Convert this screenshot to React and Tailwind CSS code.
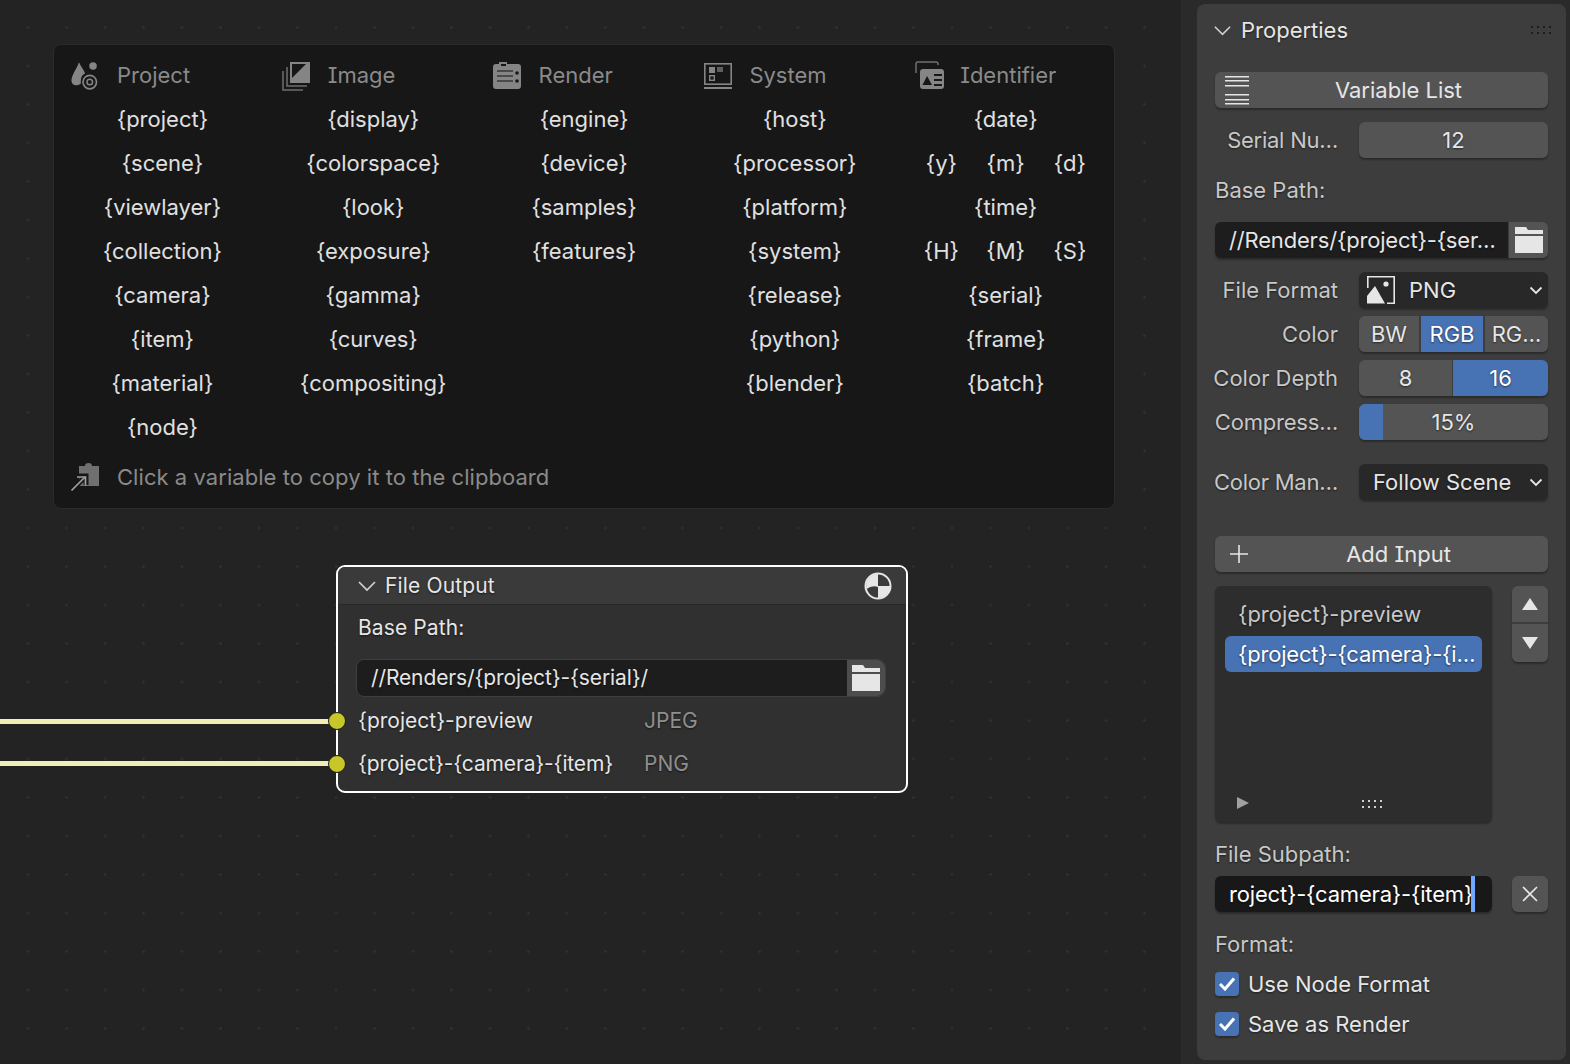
import React from 'react';

const shadow = '[text-shadow:0_1px_2px_rgba(0,0,0,0.55)]';

// icons for the variable list headers, sized in real pixels
const ProjectIcon = () => (
  <svg width="32" height="32" viewBox="0 0 32 32" fill="#858585">
    <path d="M8.5 2.5 C10 6 14 11 15 14.5 C12 15.5 10 19 10.6 24.6 C10 26.6 7 27 5.2 27 C2.5 27 0.5 24.8 0.5 22 C0.5 16 6.5 9 8.5 2.5Z" />
    <circle cx="23.5" cy="6.5" r="4" />
    <circle cx="20" cy="23.5" r="7.2" fill="none" stroke="#858585" strokeWidth="1.8" />
    <circle cx="20" cy="23.5" r="3" fill="none" stroke="#858585" strokeWidth="1.6" />
  </svg>
);

const ImageIcon = () => (
  <svg width="30" height="32" viewBox="0 0 30 32" fill="none">
    <path d="M8 3 H28 V24 H8Z" fill="#858585" />
    <path d="M10 5 H24 L10 19Z" fill="#171717" />
    <path d="M5 8 V27 H25" stroke="#6f6f6f" strokeWidth="1.5" />
    <path d="M1 12 V31 H21" stroke="#6f6f6f" strokeWidth="1.5" />
  </svg>
);

const RenderIcon = () => (
  <svg width="30" height="32" viewBox="1 0 30 32">
    <path d="M7 5 V3 H15 V5 H26 Q29 5 29 8 V27 Q29 30 26 30 H4 Q1 30 1 27 V8 Q1 5 4 5Z" fill="#858585" />
    <rect x="9" y="5" width="5" height="2" fill="#171717" />
    <rect x="5" y="11" width="16" height="2" fill="#4a4a4a" />
    <rect x="5" y="16" width="16" height="2" fill="#4a4a4a" />
    <rect x="5" y="21" width="16" height="2" fill="#4a4a4a" />
    <circle cx="25" cy="14" r="1.8" fill="#171717" />
    <circle cx="25" cy="22" r="1.8" fill="#171717" />
  </svg>
);

const SystemIcon = () => (
  <svg width="30" height="32" viewBox="0 0 30 32" fill="none">
    <rect x="1.8" y="4.8" width="26.4" height="20.4" stroke="#858585" strokeWidth="1.6" />
    <rect x="1" y="28" width="28" height="2" fill="#858585" />
    <rect x="6" y="8" width="6" height="6" fill="#858585" />
    <rect x="14" y="8" width="6" height="5" fill="#5f5f5f" />
    <rect x="6.7" y="16.7" width="4.6" height="4.6" stroke="#858585" strokeWidth="1.4" />
  </svg>
);

const IdentifierIcon = () => (
  <svg width="30" height="32" viewBox="0 0 30 32" fill="none">
    <path d="M2 14 V5 Q2 3 4 3 H22 Q24 3 24 5 V6" stroke="#6f6f6f" strokeWidth="1.5" />
    <rect x="6" y="10" width="24" height="20" rx="3" fill="#858585" />
    <path d="M8.5 26 L13 17 L18 26Z" fill="#171717" />
    <rect x="20" y="15" width="8" height="2" fill="#171717" />
    <rect x="20" y="20" width="8" height="2" fill="#171717" />
    <rect x="20" y="25" width="8" height="2" fill="#171717" />
  </svg>
);

const ClipboardIcon = () => (
  <svg width="30" height="30" viewBox="0 0 30 30" fill="none">
    <path d="M9 4 H15 Q15 1 18.5 1 Q22 1 22 4 H29 V24 H9Z" fill="#707070" />
    <path d="M2 28 L15 15" stroke="#171717" strokeWidth="5" />
    <path d="M7 14 H16 V23" stroke="#171717" strokeWidth="5" />
    <path d="M1.5 28.5 L15 15" stroke="#a0a0a0" strokeWidth="1.7" />
    <path d="M7 15 H15.5 V23.5" stroke="#a0a0a0" strokeWidth="1.7" />
  </svg>
);

const FolderIcon = () => (
  <svg width="28" height="26" viewBox="0 0 28 26" fill="#e6e6e6">
    <path d="M0 0 H11 L13 3 H28 V7 H0Z" />
    <rect x="0" y="9" width="28" height="17" />
  </svg>
);

const Chevron = ({ size = 20, color = '#d0d0d0' }) => (
  <svg width={size} height={size} viewBox="0 0 20 20" fill="none">
    <path d="M2 6 L10 14 L18 6" stroke={color} strokeWidth="1.7" />
  </svg>
);

const SmallChevron = () => (
  <svg width="14" height="10" viewBox="0 0 14 10" fill="none" className="shrink-0">
    <path d="M1.5 2.5 L7 8 L12.5 2.5" stroke="#e6e6e6" strokeWidth="1.8" />
  </svg>
);

const Dots = ({ color = '#cfcfcf' }) => (
  <svg width="22" height="10" viewBox="0 0 22 10" fill={color}>
    {[1, 7, 13, 19].map((x) => (
      <React.Fragment key={x}>
        <rect x={x} y="1" width="2" height="2" />
        <rect x={x} y="7" width="2" height="2" />
      </React.Fragment>
    ))}
  </svg>
);

const columns = [
  { title: 'Project', icon: <ProjectIcon />, items: ['{project}', '{scene}', '{viewlayer}', '{collection}', '{camera}', '{item}', '{material}', '{node}'] },
  { title: 'Image', icon: <ImageIcon />, items: ['{display}', '{colorspace}', '{look}', '{exposure}', '{gamma}', '{curves}', '{compositing}'] },
  { title: 'Render', icon: <RenderIcon />, items: ['{engine}', '{device}', '{samples}', '{features}'] },
  { title: 'System', icon: <SystemIcon />, items: ['{host}', '{processor}', '{platform}', '{system}', '{release}', '{python}', '{blender}'] },
  { title: 'Identifier', icon: <IdentifierIcon />, items: ['{date}', ['{y}', '{m}', '{d}'], '{time}', ['{H}', '{M}', '{S}'], '{serial}', '{frame}', '{batch}'] },
];

const VariableList = () => (
  <div className="absolute left-[53px] top-[44px] h-[465px] w-[1062px] rounded-lg border border-[#2b2b2b] bg-[#171717] px-[3px] pt-[8px] text-[22px]">
    <div className="grid grid-cols-5">
      {columns.map((col) => (
        <div key={col.title} className="flex flex-col">
          <div className="flex h-11 items-center gap-4 pl-[14px] text-[#8a8a8a]">
            <span className="flex w-[30px] shrink-0 overflow-visible">{col.icon}</span>
            <span>{col.title}</span>
          </div>
          {col.items.map((item, i) =>
            Array.isArray(item) ? (
              <div key={i} className="mx-[9px] grid h-11 grid-cols-3 items-center text-center text-[#e0e0e0]">
                {item.map((part) => (
                  <span key={part}>{part}</span>
                ))}
              </div>
            ) : (
              <div key={i} className="flex h-11 items-center justify-center text-[#e0e0e0]">
                {item}
              </div>
            ),
          )}
        </div>
      ))}
    </div>
    <div className="absolute bottom-[9px] left-[16px] flex h-11 items-center gap-[17px] text-[#8a8a8a]">
      <span className="flex w-[30px] shrink-0">
        <ClipboardIcon />
      </span>
      <span className="tracking-[0.05px]">Click a variable to copy it to the clipboard</span>
    </div>
  </div>
);

const FileOutputNode = () => (
  <div className={`absolute left-[336px] top-[565px] h-[228px] w-[572px] rounded-[9px] border-2 border-white bg-[#303030] text-[21px] text-[#e6e6e6] ${shadow}`}>
    <div className="flex h-[38px] items-center rounded-t-[7px] border-b border-[#282828] bg-[#3a3a3a] pl-[19px] pr-[14px]">
      <Chevron />
      <span className="ml-[8px] flex-1 tracking-[0.15px]">File Output</span>
      <svg width="28" height="28" viewBox="0 0 28 28">
        <circle cx="14" cy="14" r="12.5" fill="#3a3a3a" stroke="#e6e6e6" strokeWidth="2" />
        <path d="M14 2 V14 H26 A12 12 0 0 1 14 26Z" fill="#e6e6e6" />
        <path d="M14 2 A12 12 0 0 0 2.5 17 Q8 13 14 15Z" fill="#e6e6e6" />
      </svg>
    </div>
    <div className="flex h-[46px] items-center pl-5 tracking-[0.1px]">Base Path:</div>
    <div className="ml-[18px] mt-[8px] flex h-[38px] w-[530px] rounded-lg border border-[#3f3f3f] bg-[#1d1d1d]">
      <div className="flex flex-1 items-center pl-[14px] tracking-[-0.12px]">//Renders/{'{project}'}-{'{serial}'}/</div>
      <div className="flex w-[38px] items-center justify-center rounded-r-lg bg-[#4d4d4d]">
        <FolderIcon />
      </div>
    </div>
    <div className="mt-[2px] flex h-[43px] items-center pl-5">
      <span className="w-[286px]">{'{project}'}-preview</span>
      <span className="text-[#8f8f8f]">JPEG</span>
    </div>
    <div className="flex h-[43px] items-center pl-5">
      <span className="w-[286px] tracking-[-0.15px]">{'{project}'}-{'{camera}'}-{'{item}'}</span>
      <span className="text-[#8f8f8f]">PNG</span>
    </div>
    <span className="absolute -left-[10px] top-[145px] h-[18px] w-[18px] rounded-full border border-[#1d1d1d] bg-[#c7c729]" />
    <span className="absolute -left-[10px] top-[188px] h-[18px] w-[18px] rounded-full border border-[#1d1d1d] bg-[#c7c729]" />
  </div>
);

const Canvas = () => (
  <div className="relative h-full w-[1181px] shrink-0 overflow-hidden bg-[#232323] bg-[radial-gradient(circle,#303030_1px,transparent_1.5px)] bg-[size:38.5px_38.5px] bg-[position:8.75px_8.25px]">
    <VariableList />
    {/* node links */}
    <div className="absolute left-0 top-[719px] h-[5px] w-[330px] bg-[#f0eeb4]" />
    <div className="absolute left-0 top-[761px] h-[5px] w-[330px] bg-[#f0eeb4]" />
    <FileOutputNode />
  </div>
);

const Label = ({ children }) => (
  <div className={`flex w-[144px] shrink-0 justify-end whitespace-nowrap pr-[10px] text-[#c8c8c8] ${shadow}`}>
    <span className="mr-[10px] pr-[1px]">{children}</span>
  </div>
);

const btnShadow = 'shadow-[0_2px_2px_rgba(0,0,0,0.3)]';

const Sidebar = () => (
  <div className="h-full flex-1 bg-[#2a2a2a] pl-4 pr-[4px] pt-1">
    <div className={`h-[1056px] rounded-lg bg-[#3d3d3d] px-[18px] text-[22px] text-[#e6e6e6] ${shadow}`}>
      {/* panel header */}
      <div className="flex h-[52px] items-center">
        <span className="-ml-[2px] flex">
          <Chevron size={19} />
        </span>
        <span className="ml-[9px] flex-1">Properties</span>
        <span className="-mr-[4px]">
          <Dots color="#1d1d1d" />
        </span>
      </div>

      <button className={`relative mt-4 flex h-9 w-full items-center justify-center rounded-md bg-[#545454] pl-[34px] ${btnShadow}`}>
        <svg className="absolute left-[10px] top-[3px]" width="24" height="30" viewBox="0 0 24 30" fill="#e6e6e6">
          {[1, 5, 10, 19, 24, 28].map((y) => (
            <rect key={y} x="0" y={y} width="24" height="1.5" />
          ))}
        </svg>
        Variable List
      </button>

      <div className="mt-[14px] flex h-9 items-center">
        <Label><span className="tracking-[-0.25px]">Serial Nu…</span></Label>
        <div className={`flex h-full flex-1 items-center justify-center rounded-md bg-[#545454] ${btnShadow}`}>12</div>
      </div>

      <div className="mt-[14px] flex h-9 items-center text-[#c8c8c8]">Base Path:</div>

      <div className={`mt-[14px] flex h-9 rounded-md ${btnShadow}`}>
        <div className="flex flex-1 items-center whitespace-nowrap rounded-l-md bg-[#1d1d1d] pl-[14px] tracking-[-0.17px]">//Renders/{'{project}'}-{'{ser…'}</div>
        <div className="ml-[1px] flex w-[39px] items-center justify-center rounded-r-md bg-[#545454]">
          <FolderIcon />
        </div>
      </div>

      <div className="mt-[14px] flex h-9 items-center">
        <Label>File Format</Label>
        <div className={`flex h-full flex-1 items-center rounded-md bg-[#282828] pl-2 pr-[5px] ${btnShadow}`}>
          <svg width="28" height="28" viewBox="0 0 28 28" fill="none">
            <path d="M0.8 12 V0.8 H27.2 V27.2 H20" stroke="#e6e6e6" strokeWidth="1.6" />
            <path d="M0 27.5 V20 L8 10 L18 27.5Z" fill="#e6e6e6" />
            <circle cx="19" cy="8" r="2.6" fill="#e6e6e6" />
          </svg>
          <span className="ml-[14px] flex-1">PNG</span>
          <SmallChevron />
        </div>
      </div>

      <div className="mt-2 flex h-9 items-center">
        <Label>Color</Label>
        <div className={`flex h-full flex-1 gap-[2px] rounded-md ${btnShadow}`}>
          <div className="flex w-[60px] items-center justify-center rounded-l-md bg-[#545454]">BW</div>
          <div className="flex w-[62px] items-center justify-center bg-[#4772b3] text-white">RGB</div>
          <div className="flex flex-1 items-center justify-center rounded-r-md bg-[#545454]">RG…</div>
        </div>
      </div>

      <div className="mt-2 flex h-9 items-center">
        <Label>Color Depth</Label>
        <div className={`flex h-full flex-1 gap-[1px] rounded-md ${btnShadow}`}>
          <div className="flex w-[93px] items-center justify-center rounded-l-md bg-[#545454]">8</div>
          <div className="flex flex-1 items-center justify-center rounded-r-md bg-[#4772b3] text-white">16</div>
        </div>
      </div>

      <div className="mt-2 flex h-9 items-center">
        <Label><span className="tracking-[-0.2px]">Compress…</span></Label>
        <div className={`relative flex h-full flex-1 items-center justify-center overflow-hidden rounded-md bg-[#545454] ${btnShadow}`}>
          <span className="absolute inset-y-0 left-0 w-[24px] bg-[#4772b3]" />
          <span className="relative">15%</span>
        </div>
      </div>

      <div className="mt-6 flex h-9 items-center">
        <Label><span className="tracking-[-0.25px]">Color Man…</span></Label>
        <div className={`flex h-full flex-1 items-center rounded-md bg-[#282828] pl-[14px] pr-[5px] ${btnShadow}`}>
          <span className="flex-1 whitespace-nowrap">Follow Scene</span>
          <SmallChevron />
        </div>
      </div>

      <button className={`relative mt-9 flex h-9 w-full items-center justify-center rounded-md bg-[#545454] pl-[34px] ${btnShadow}`}>
        <svg className="absolute left-[14px] top-[8px]" width="20" height="20" viewBox="0 0 20 20" stroke="#e6e6e6" strokeWidth="1.6">
          <path d="M10 1 V19 M1 10 H19" />
        </svg>
        Add Input
      </button>

      {/* input list */}
      <div className="mt-[14px] flex h-[236px] gap-5">
        <div className={`relative w-[277px] rounded-md bg-[#2d2d2d] px-[10px] pt-[10px] ${btnShadow}`}>
          <div className="flex h-9 items-center pl-[13px] text-[#c8c8c8]">{'{project}'}-preview</div>
          <div className="mt-1 flex h-9 items-center whitespace-nowrap rounded-md bg-[#4772b3] pl-[13px] text-white tracking-[-0.2px]">{'{project}'}-{'{camera}'}-{'{i…'}</div>
          <svg className="absolute bottom-[13px] left-[22px]" width="12" height="12" viewBox="0 0 12 12" fill="#a0a0a0">
            <path d="M0 0 L12 6 L0 12Z" />
          </svg>
          <span className="absolute bottom-[13px] left-[146px] flex">
            <Dots />
          </span>
        </div>
        <div className={`flex h-[76px] w-9 flex-col gap-[2px] rounded-md ${btnShadow}`}>
          <div className="flex h-9 items-center justify-center rounded-t-md bg-[#545454]">
            <svg width="16" height="12" viewBox="0 0 16 12" fill="#e6e6e6"><path d="M8 0 L16 12 H0Z" /></svg>
          </div>
          <div className="flex flex-1 items-center justify-center rounded-b-md bg-[#545454]">
            <svg width="16" height="12" viewBox="0 0 16 12" fill="#e6e6e6"><path d="M0 0 H16 L8 12Z" /></svg>
          </div>
        </div>
      </div>

      <div className="mt-[14px] flex h-9 items-center text-[#c8c8c8]">File Subpath:</div>

      <div className="mt-[4px] flex h-9 gap-5">
        <div className={`relative flex w-[277px] items-center overflow-hidden whitespace-nowrap rounded-md bg-[#181818] pl-[14px] text-white tracking-[-0.18px] ${btnShadow}`}>
          {'roject}'}-{'{camera}'}-{'{item}'}
          <span className="absolute inset-y-0 left-[256px] w-[4px] bg-[#71a8ff]" />
        </div>
        <div className={`flex w-9 items-center justify-center rounded-md bg-[#545454] ${btnShadow}`}>
          <svg width="16" height="16" viewBox="0 0 16 16" stroke="#e6e6e6" strokeWidth="1.7">
            <path d="M1 1 L15 15 M15 1 L1 15" />
          </svg>
        </div>
      </div>

      <div className="mt-[14px] flex h-9 items-center text-[#c8c8c8]">Format:</div>

      {['Use Node Format', 'Save as Render'].map((label, i) => (
        <div key={label} className={`flex h-6 items-center ${i === 0 ? 'mt-[10px]' : 'mt-4'}`}>
          <span className={`flex h-6 w-6 items-center justify-center rounded-[4px] bg-[#4772b3] ${btnShadow}`}>
            <svg width="16" height="14" viewBox="0 0 16 14" fill="none" stroke="#fff" strokeWidth="3">
              <path d="M1 7 L6 12 L15 1.5" />
            </svg>
          </span>
          <span className="ml-[9px]">{label}</span>
        </div>
      ))}
    </div>
  </div>
);

export default function App() {
  return (
    <div className="flex h-[1064px] w-[1570px] overflow-hidden font-['Inter',sans-serif] [font-feature-settings:'cv08']">
      <Canvas />
      <Sidebar />
    </div>
  );
}
